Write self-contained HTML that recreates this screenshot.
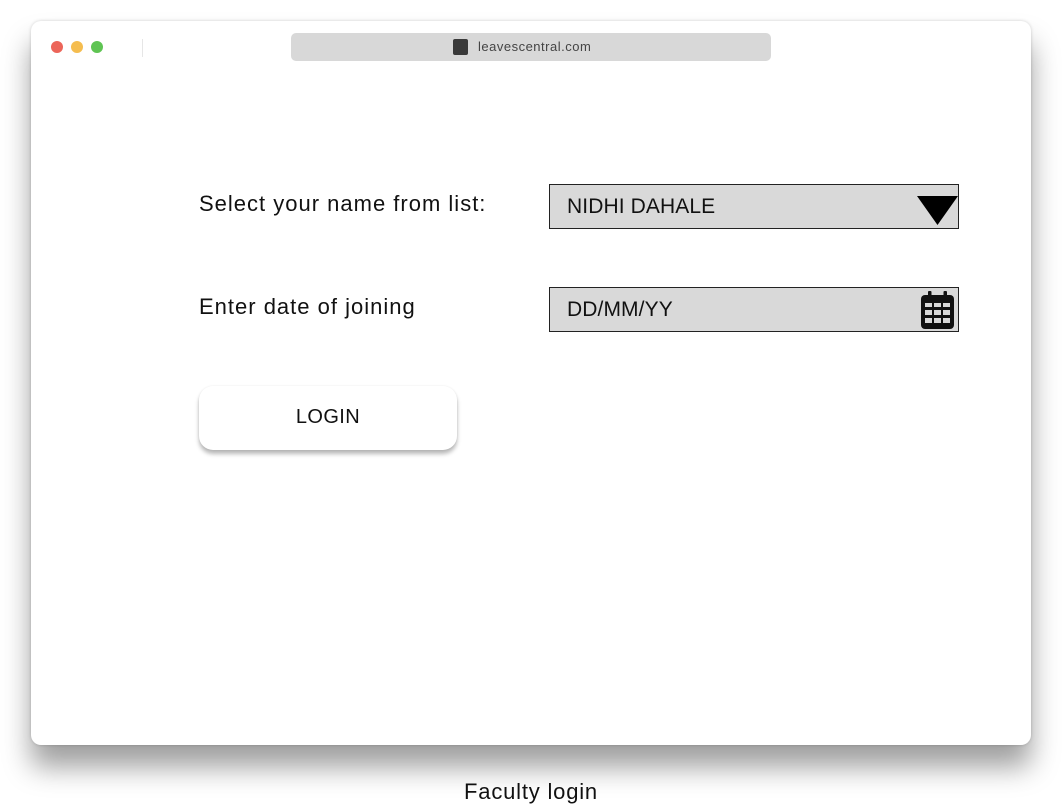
<!DOCTYPE html>
<html><head><meta charset="utf-8"><style>
*{margin:0;padding:0;box-sizing:border-box}
body{width:1062px;height:807px;background:#fff;position:relative;font-family:"Liberation Sans",sans-serif;overflow:hidden}
.win{position:absolute;left:31px;top:21px;width:1000px;height:724px;background:#fff;border-radius:10px;box-shadow:0 22px 28px rgba(0,0,0,0.38),0 0 3px rgba(0,0,0,0.18)}
.dot{position:absolute;top:20px;width:12px;height:12px;border-radius:50%}
.sep{position:absolute;left:111px;top:18px;width:1px;height:18px;background:#e6e6e6}
.url{position:absolute;left:260px;top:12px;width:480px;height:28px;background:#d8d8d8;border-radius:5px}
.fav{position:absolute;left:162px;top:6px;width:15px;height:16px;background:#3a3a3a;border-radius:2px}
.url span{position:absolute;left:187px;top:6px;font-size:13px;color:#444;letter-spacing:0.5px}
.lbl{position:absolute;font-size:22px;color:#111;letter-spacing:1px}
.box{position:absolute;left:549px;width:410px;height:45px;background:#d9d9d9;border:1px solid #222}
.box span{position:absolute;left:17px;top:10px;font-size:21px;color:#111;letter-spacing:0.1px}
.btn{position:absolute;left:199px;top:386px;width:258px;height:64px;background:#fff;border-radius:14px;box-shadow:0 4px 4px rgba(0,0,0,0.28),0 0 2px rgba(0,0,0,0.08);text-align:center;line-height:62px;font-size:20px;color:#111;letter-spacing:0.4px}
.cap{position:absolute;left:0;width:1062px;top:779px;text-align:center;font-size:22px;color:#111;letter-spacing:0.8px}
</style></head><body>
<div class="win">
 <div class="dot" style="left:20px;background:#ec6559"></div>
 <div class="dot" style="left:40px;background:#f5bd4f"></div>
 <div class="dot" style="left:60px;background:#5fc453"></div>
 <div class="sep"></div>
 <div class="url"><div class="fav"></div><span>leavescentral.com</span></div>
</div>
<div class="lbl" style="left:199px;top:191px">Select your name from list:</div>
<div class="lbl" style="left:199px;top:294px">Enter date of joining</div>
<div class="box" style="top:184px"><span>NIDHI DAHALE</span>
 <svg style="position:absolute;left:367px;top:11px" width="41" height="29"><polygon points="0,0 41,0 20.5,29" fill="#000"/></svg>
</div>
<div class="box" style="top:287px"><span>DD/MM/YY</span>
 <svg style="position:absolute;left:371px;top:3px" width="33" height="38" viewBox="0 0 33 38">
  <rect x="7" y="0" width="3.5" height="7" rx="1" fill="#111"/><rect x="22.5" y="0" width="3.5" height="7" rx="1" fill="#111"/>
  <rect x="0" y="4" width="33" height="34" rx="4" fill="#111"/>
  <g fill="#d9d9d9">
   <rect x="4" y="12" width="7" height="4"/><rect x="13" y="12" width="7" height="4"/><rect x="22" y="12" width="7" height="4"/>
   <rect x="4" y="19" width="7" height="5"/><rect x="13" y="19" width="7" height="5"/><rect x="22" y="19" width="7" height="5"/>
   <rect x="4" y="27" width="7" height="5"/><rect x="13" y="27" width="7" height="5"/><rect x="22" y="27" width="7" height="5"/>
  </g>
 </svg>
</div>
<div class="btn">LOGIN</div>
<div class="cap">Faculty login</div>
</body></html>
